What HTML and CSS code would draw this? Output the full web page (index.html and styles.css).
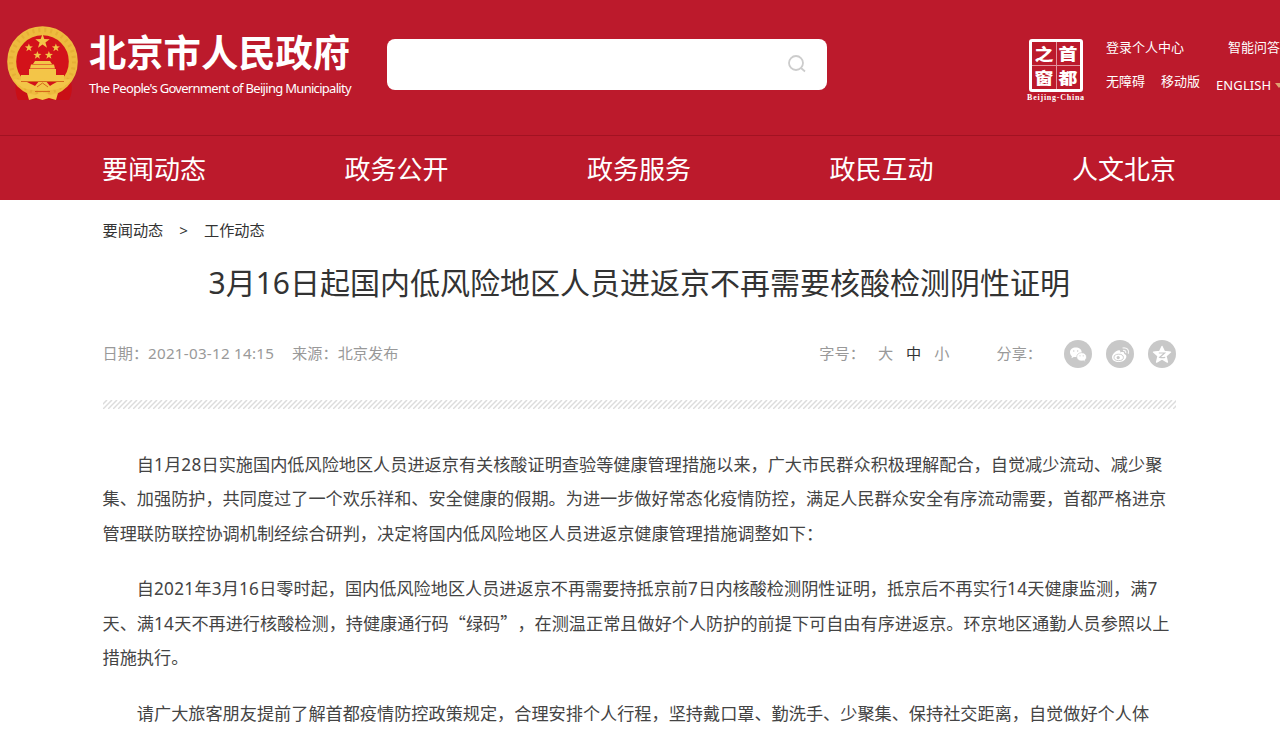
FILE: index.html
```html
<!DOCTYPE html>
<html lang="zh-CN">
<head>
<meta charset="utf-8">
<title>北京市人民政府</title>
<link rel="stylesheet" href="styles.css">
</head>
<body>
<header class="header">
  <div class="brand">
    <svg class="emblem" viewBox="0 0 72 76">
      <path d="M10 53C7 60 9 70 11 74h51c3-6 4-13 1-21z" fill="#c90f16"/>
      <circle cx="35.500" cy="35.500" r="30.800" fill="#d3121a" stroke="#eebb3e" stroke-width="9"/>
      <circle cx="35.500" cy="35.500" r="31.500" fill="none" stroke="#dda32c" stroke-width="4" stroke-dasharray="2 4" opacity=".5"/>
      <g fill="#f3c548">
        <path id="star" d="M35.500 8l1.800 5.100 5.400.1-4.300 3.300 1.600 5.200-4.500-3.100-4.500 3.100 1.600-5.200-4.300-3.300 5.400-.1z"/>
        <use href="#star" transform="translate(2 13) scale(.56)"/>
        <use href="#star" transform="translate(29 13) scale(.56)"/>
        <use href="#star" transform="translate(10.500 20.500) scale(.56)"/>
        <use href="#star" transform="translate(22 20.500) scale(.56)"/>
        <path d="M26 38l2-3h15l2 3zM23 42.500l1-4h23l1 4zM22 43h27v6H22zM14 49h43v6H14z"/>
        <path d="M7 53c9 0 15 4 21 7l7.500-9 7.500 9c6-4 12-7 21-7-3 7-12 11-20 11H27C18 64 10 60 7 53z"/>
        <path d="M20 67l8 2 7.500-3 7.500 3 8-2-2 7-7-2-6.500 2-6.500-2-7 2z"/>
      </g>
      <path d="M14 55.500h43M30 61l5.500-4 5.500 4M28 65.500h15" stroke="#d6691c" fill="none"/>
    </svg>
    <div class="brand-text">
      <div class="brand-cn">北京市人民政府</div>
      <div class="brand-en">The People's Government of Beijing Municipality</div>
    </div>
  </div>
  <div class="search">
    <svg class="search-icon" viewBox="0 0 20 20"><circle cx="9" cy="9" r="7" /><path d="M14 14l4 3.500"/></svg>
  </div>
  <div class="capital">
    <div class="seal"><span>之</span><span>首</span><span>窗</span><span>都</span></div>
    <div class="seal-en">Beijing-China</div>
  </div>
  <div class="tools">
    <div class="tools-row"><span>登录个人中心</span><span class="qa">智能问答</span></div>
    <div class="tools-row second"><span>无障碍</span><span class="mobile">移动版</span><span class="english">ENGLISH</span><i class="caret"></i></div>
  </div>
</header>
<nav class="nav"><span>要闻动态</span><span>政务公开</span><span>政务服务</span><span>政民互动</span><span>人文北京</span></nav>
<main class="main">
  <div class="crumbs"><span>要闻动态</span><span>&gt;</span><span>工作动态</span></div>
  <h1 class="title">3月16日起国内低风险地区人员进返京不再需要核酸检测阴性证明</h1>
  <div class="meta">
    <span class="date">日期：<span class="stamp">2021-03-12 14:15</span></span><span class="source">来源：北京发布</span>
    <span class="size-label">字号：</span><span class="sizes"><span>大</span><span class="active">中</span><span>小</span></span>
    <span class="share-label">分享：</span>
    <span class="share">
      <svg viewBox="0 0 28 28"><circle cx="14" cy="14" r="14" fill="#c8c8c8"/><path d="M6 12.300c0-2.700 2.500-4.700 5.800-4.700s5.900 2 5.900 4.700-2.500 4.800-5.900 4.800l-2-.2-2.300 1.300.4-2C6.700 15.300 6 13.900 6 12.300z" fill="#fff"/><path d="M12.700 17c0-2.500 2-4.300 4.900-4.300s4.900 1.800 4.900 4.300c0 1.300-.6 2.300-1.600 3l.4 1.700-2-.9c-3.500.8-6.600-1-6.600-3.800z" fill="#fff" stroke="#c8c8c8" stroke-width=".7"/><g fill="#c8c8c8"><circle cx="9.800" cy="11" r=".7"/><circle cx="13.700" cy="11" r=".7"/><circle cx="16" cy="15.800" r=".6"/><circle cx="19.200" cy="15.800" r=".6"/></g></svg>
      <svg viewBox="0 0 28 28"><circle cx="14" cy="14" r="14" fill="#c8c8c8"/><path d="M6 17.300c0-3.200 4.500-7.500 7.300-7 1 .2 1.200 1 .9 2.100 2.400-.9 4.500-.6 4 1.600 1.700.5 2.600 1.700 2 3.400-1.900 6.200-14.200 6.200-14.200-.1z" fill="#fff"/><ellipse cx="12.700" cy="17.400" rx="4.700" ry="3.200" fill="none" stroke="#c8c8c8" stroke-width=".9"/><circle cx="12.200" cy="17.600" r="1.600" fill="#c8c8c8"/><path d="M17 10.500c2-.4 3.200.8 2.700 2.700M16.500 8c4.500-.8 7 2 5.800 5.800" fill="none" stroke="#fff" stroke-width="1.200" opacity=".85"/></svg>
      <svg viewBox="0 0 28 28"><circle cx="14" cy="14" r="14" fill="#c8c8c8"/><path d="M14 6.500l2.400 5 6.100.6-4.500 4 1.400 6-5.400-3.100-5.400 3.100 1.400-6-4.500-4 6.100-.6z" fill="#fff" stroke="#fff" stroke-width="1.400" stroke-linejoin="round"/><path d="M10.800 13h5.800l-4.800 4.300c2 .5 3.500.5 5.400 0" fill="none" stroke="#c8c8c8" stroke-width="1.200"/></svg>
    </span>
  </div>
  <svg class="stripe"><defs><pattern id="hatch" width="5" height="9" patternUnits="userSpaceOnUse"><path d="M-5 9L4 0M0 9L9 0M-10 9L-1 0" stroke="#dcdcdc" stroke-width="1.500"/></pattern></defs><rect width="100%" height="100%" fill="url(#hatch)"/></svg>
  <article class="article">
    <p>自<span class="num">1</span>月<span class="num">28</span>日实施国内低风险地区人员进返京有关核酸证明查验等健康管理措施以来，广大市民群众积极理解配合，自觉减少流动、减少聚<br>集、加强防护，共同度过了一个欢乐祥和、安全健康的假期。为进一步做好常态化疫情防控，满足人民群众安全有序流动需要，首都严格进京<br>管理联防联控协调机制经综合研判，决定将国内低风险地区人员进返京健康管理措施调整如下：</p>
    <p>自<span class="num">2021</span>年<span class="num">3</span>月<span class="num">16</span>日零时起，国内低风险地区人员进返京不再需要持抵京前<span class="num">7</span>日内核酸检测阴性证明，抵京后不再实行<span class="num">14</span>天健康监测，满<span class="num">7</span><br>天、满<span class="num">14</span>天不再进行核酸检测，持健康通行码<span class="quote">“绿码”</span>，在测温正常且做好个人防护的前提下可自由有序进返京。环京地区通勤人员参照以上<br>措施执行。</p>
    <p>请广大旅客朋友提前了解首都疫情防控政策规定，合理安排个人行程，坚持戴口罩、勤洗手、少聚集、保持社交距离，自觉做好个人体</p>
  </article>
</main>
</body>
</html>
```
FILE: styles.css
```css
* { box-sizing: border-box; }
body {
  margin: 0;
  height: 729px;
  overflow: hidden;
  background: #fff;
  color: #333;
  font-family: "Noto Sans", "Noto Sans CJK SC", sans-serif;
  text-spacing-trim: space-all;
  white-space: nowrap;
}
.header {
  display: flex;
  align-items: flex-start;
  height: 135px;
  background: #bc1a2c;
  color: #fff;
  overflow: hidden;
}
.brand { display: flex; flex: none; width: 387px; padding: 26px 0 0 7px; }
.emblem { flex: none; width: 72px; height: 76px; }
.brand-text { margin-left: 10px; }
.brand-cn { font-size: 37.300px; font-weight: 700; line-height: 54px; }
.brand-en { font-size: 13px; line-height: 18px; letter-spacing: -.7px; margin-top: -1px; }
.search {
  display: flex;
  flex: none;
  justify-content: flex-end;
  width: 440px;
  height: 51px;
  margin-top: 39px;
  padding: 15px 20px 0 0;
  border-radius: 8px;
  background: #fff;
}
.search-icon { width: 20px; height: 20px; fill: none; stroke: #ccc; stroke-width: 1.800; }
.capital { flex: none; width: 60px; margin: 39px 0 0 199px; }
.seal {
  display: grid;
  grid-template-columns: 24px 24px;
  grid-template-rows: 23.500px 23.500px;
  width: 54px;
  height: 53px;
  margin-left: 3px;
  border: 3px solid #fff;
  border-radius: 3px;
  background:
    linear-gradient(#e3949e, #e3949e) center / 1px 100% no-repeat,
    linear-gradient(#e3949e, #e3949e) center / 100% 1px no-repeat;
}
.seal span {
  font-family: "Noto Sans CJK SC", sans-serif;
  font-size: 16px;
  font-weight: 900;
  line-height: 23px;
  text-align: center;
  transform: scaleX(1.180);
}
.seal-en { margin-top: 1px; font: 700 8px/9px "Liberation Serif", serif; letter-spacing: .75px; text-align: center; }
.tools { flex: none; width: 220px; margin: 37px 0 0 20px; font-size: 13px; line-height: 20px; }
.tools-row { display: flex; }
.tools-row.second { margin-top: 14px; }
.qa { margin-left: 44px; }
.mobile { margin-left: 16px; }
.english { margin: 4px 0 0 16px; letter-spacing: .1px; }
.caret { margin: 12px 0 0 4px; border: 4px solid transparent; border-top: 5px solid #e0a070; border-bottom: 0; height: 5px; }
.nav {
  display: flex;
  justify-content: space-between;
  height: 65px;
  padding: 1px 104px 0 102px;
  border-top: 1px solid #a21222;
  background: #bc1a2c;
  color: #fff;
  font-size: 26px;
  line-height: 65px;
}
.main { padding: 0 104px 0 102.500px; }
.crumbs { display: flex; gap: 16px; padding-top: 18px; font-size: 15.200px; line-height: 24px; }
.title { margin: 18px 0 0; font-size: 30px; font-weight: 400; line-height: 46px; text-align: center; }
.meta { display: flex; align-items: center; height: 28px; margin-top: 34px; color: #999; font-size: 15.200px; line-height: 24px; }
.meta > span:not(.share) { margin-top: -3px; }
.stamp { letter-spacing: .25px; }
.source { margin-left: 18px; }
.size-label { margin-left: auto; }
.sizes { display: flex; gap: 13px; margin-left: 13px; }
.active { color: #333; }
.share-label { margin-left: 47px; }
.share { display: flex; gap: 14px; margin-left: 22px; }
.share svg { width: 28px; height: 28px; }
.stripe { display: block; width: 1073px; height: 9px; margin-top: 32px; }
.article { padding-top: 39px; color: #444; font-size: 17.170px; line-height: 34.300px; }
.article p { margin: 0 0 21.500px; text-indent: 2em; }
.num { letter-spacing: .300px; }
.quote { font-family: "Noto Sans CJK SC", sans-serif; line-height: 1; }
```
